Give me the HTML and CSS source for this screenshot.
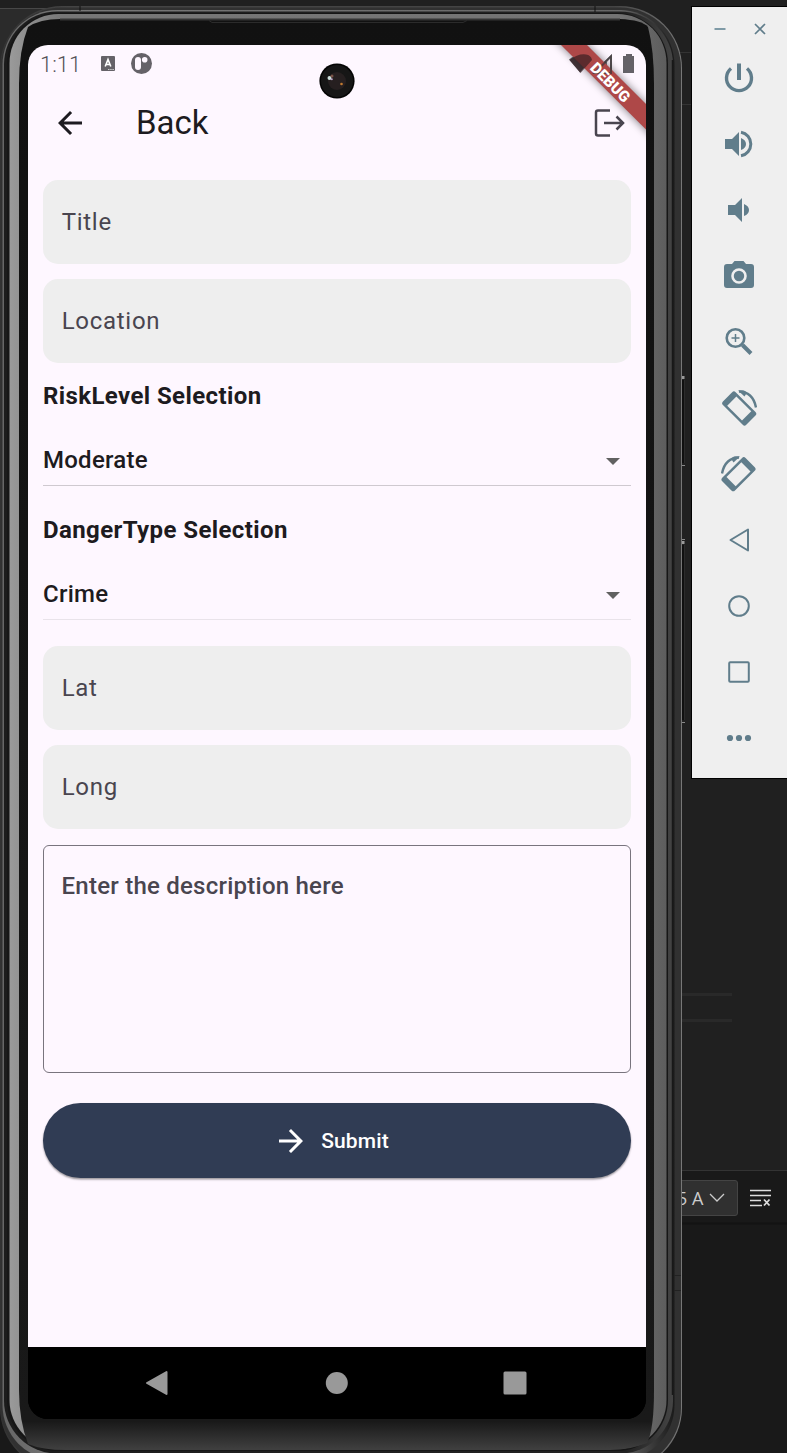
FILE: index.html
```html
<!DOCTYPE html>
<html lang="en">
<head>
<meta charset="utf-8">
<title>Android Emulator</title>
<link rel="stylesheet" href="styles.css">
</head>
<body>
<div class="desktop">
  <svg class="backdrop" width="787" height="1453" viewBox="0 0 787 1453">
    <rect width="787" height="1453" fill="#202020"/>
    <rect y="8" width="60" height="190" fill="#2b2b2b"/>
    <path d="M0 8.500H60" stroke="#484848"/>
    <path d="M670 52.500H692M670 104.500H692" stroke="#333"/>
    <path d="M680 994.500H732M680 1020.500H732" stroke="#292929" stroke-width="3"/>
    <rect y="1170" width="787" height="283" fill="#191919"/>
    <path d="M670 1170.500H787" stroke="#333"/>
    <path d="M670 1223.500H787" stroke="#131313" stroke-width="2"/>
  </svg>

  <div class="ide-bar">
    <div class="ide-select"><span class="ide-text">5 A</span>
      <svg width="18" height="12" viewBox="0 0 18 12"><path d="M2 2l7 7 7-7" fill="none" stroke="#ccc" stroke-width="1.300"/></svg>
    </div>
    <svg width="23" height="18" viewBox="0 0 23 18"><path d="M1 1.500H22M1 6.500H22M1 11.500H12M1 16.500H13" stroke="#ddd" stroke-width="1.600"/><path d="M15 10.500l5.500 6M20.500 10.500l-5.500 6" stroke="#ddd" stroke-width="1.800"/></svg>
  </div>

  <div class="phone">
    <svg class="frame" width="690" height="1453" viewBox="0 0 690 1453">
      <defs>
        <linearGradient id="f1"><stop offset="0" stop-color="#333"/><stop offset=".1" stop-color="#444"/><stop offset=".9" stop-color="#444"/><stop offset="1" stop-color="#777"/></linearGradient>
        <linearGradient id="f2"><stop offset="0" stop-color="#666"/><stop offset=".1" stop-color="#777"/><stop offset=".92" stop-color="#666"/><stop offset="1" stop-color="#1a1a1a"/></linearGradient>
        <linearGradient id="f3"><stop offset="0" stop-color="#1c1c1c"/><stop offset=".93" stop-color="#222"/><stop offset="1" stop-color="#444"/></linearGradient>
        <linearGradient id="f4"><stop offset="0" stop-color="#9a9a9a"/><stop offset=".08" stop-color="#777"/><stop offset=".93" stop-color="#737373"/><stop offset="1" stop-color="#5d5d5d"/></linearGradient>
        <linearGradient id="f5" x2="0" y2="1"><stop offset="0" stop-color="#111"/><stop offset=".98" stop-color="#191919"/><stop offset="1" stop-color="#404040"/></linearGradient>
      </defs>
      <path d="M681 380h4v83h-4zM681 545h4v175h-4z" fill="#101010"/>
      <path d="M684.500 380v83M684.500 545v175" stroke="#2c2c2c"/>
      <path d="M681.500 376h3v3h-3zM681.500 541h3v3h-3z" fill="#999"/>
      <path d="M681 465.500h4M681 539.500h4M681 722.500h4" stroke="#888"/>
      <rect x="0" y="6" width="682" height="1464" rx="62" fill="url(#f1)"/>
      <rect x="1" y="7.500" width="680" height="1461" rx="61" fill="#313131"/>
      <rect x="2.500" y="10" width="672" height="1450" rx="55" fill="url(#f2)"/>
      <rect x="4" y="11.500" width="669" height="1442" rx="53" fill="url(#f3)"/>
      <rect x="7" y="13" width="661" height="1438" rx="51" fill="#161616"/>
      <rect x="9.500" y="14" width="657" height="1435" rx="49" fill="url(#f4)"/>
      <path d="M60 19H620Q642 20 648 27Q654 50 654 84V1390Q654 1430 647 1443Q630 1450 610 1450H66Q42 1450 28 1444Q19 1420 19 1390V84Q19 50 28 27Q40 19 60 19Z" fill="url(#f5)"/>
      <path d="M60 19.500H620" stroke="#343434" stroke-width="2"/>
      <path d="M209 20.500l3 2H463l4-2" fill="none" stroke="#2b2b2b"/>
      <path d="M80 6V11M595 6V12" stroke="#111"/>
      <path d="M674 1275.500h7M674 1290.500h7" stroke="#222"/>
      <path d="M672.500 60V1395" stroke="#181818" stroke-width="1.500"/>
    </svg>

    <div class="screen">
      <div class="status">
        <span class="clock">1:11</span>
        <svg class="st-a" width="14" height="15" viewBox="0 0 14 15"><rect width="14" height="15" rx="1" fill="#656268"/><path d="M4.200 10.500L7 3.500l2.800 7M5 8.500h4" fill="none" stroke="#fff" stroke-width="1.600"/><path d="M7 13.500h6" stroke="#ccc" stroke-dasharray="1.500 .7"/></svg>
        <svg class="st-p" width="21" height="21" viewBox="0 0 21 21"><circle cx="10.500" cy="10.500" r="10.500" fill="#656268"/><rect x="4" y="4" width="6" height="13" rx="3" fill="#fef7ff"/><circle cx="13.700" cy="6.800" r="2.800" fill="#fef7ff"/></svg>
        <svg class="st-r" width="66" height="20" viewBox="0 0 66 20"><path d="M0 5.500Q11 -4 22 5.500L11 18.500Z" fill="#656268"/><path d="M25.500 18.500H42V2Z M37 17V8" fill="none" stroke="#656268" stroke-width="1.700"/><path d="M57 0h6v2h2v17H54V2h3z" fill="#656268"/></svg>
      </div>

      <div class="appbar">
        <svg class="i-back" width="36" height="36" viewBox="0 0 24 24"><path d="M20 11H7.830l5.590-5.590L12 4l-8 8 8 8 1.410-1.410L7.830 13H20v-2z" fill="#1d1b20"/></svg>
        <h1 class="title">Back</h1>
        <svg class="i-exit" width="32" height="28" viewBox="0 0 32 28"><path d="M16 1.500H4Q2 1.500 2 3.500V24.500Q2 26.500 4 26.500H16" fill="none" stroke="#49454f" stroke-width="2.500"/><path d="M10 14H29M22.500 7.500L29 14L22.500 20.500" fill="none" stroke="#49454f" stroke-width="2.500"/></svg>
      </div>

      <div class="form">
        <div class="field">Title</div>
        <div class="field">Location</div>
        <h2 class="heading risk">RiskLevel Selection</h2>
        <div class="drop"><span>Moderate</span><i class="caret"></i></div>
        <h2 class="heading danger">DangerType Selection</h2>
        <div class="drop second"><span>Crime</span><i class="caret"></i></div>
        <div class="field lat">Lat</div>
        <div class="field">Long</div>
        <div class="area">Enter the description here</div>
        <div class="submit"><svg width="36" height="36" viewBox="0 0 24 24"><path d="M12 4l-1.410 1.410L16.170 11H4v2h12.170l-5.580 5.590L12 20l8-8z" fill="#fff"/></svg><span>Submit</span></div>
      </div>

      <div class="nav">
        <svg width="22" height="26" viewBox="0 0 22 26"><path d="M1 13L20.500 2V24Z" fill="#999" stroke="#999" stroke-width="2" stroke-linejoin="round"/></svg>
        <svg width="24" height="24" viewBox="0 0 24 24"><circle cx="12.800" cy="12" r="11" fill="#999"/></svg>
        <svg width="24" height="24" viewBox="0 0 24 24"><rect x=".5" y=".5" width="23" height="23" rx="1.500" fill="#999"/></svg>
      </div>

      <svg class="banner" width="118" height="118" viewBox="0 0 118 118">
        <defs><filter id="blur" x="-20%" y="-20%" width="140%" height="140%"><feGaussianBlur stdDeviation="4.500"/></filter></defs>
        <path d="M13 -20L138 105V79L39 -20Z" fill="#000" opacity=".5" filter="url(#blur)"/>
        <path d="M33 0H59L118 59V84.500Z" fill="#ae4848"/>
        <path d="M41.500 15Q50 8.500 58 9.500Q63 10 64 15L52.500 28Z" fill="#301c1e" opacity=".65"/>
        <path d="M66.500 28H83V11.500Z" fill="none" stroke="#3c3638" stroke-width="2" opacity=".7"/>
        <text class="debug" transform="translate(82 37.500) rotate(45)" text-anchor="middle" y="5">DEBUG</text>
      </svg>
      <svg class="camera" width="36" height="36" viewBox="0 0 36 36"><circle cx="18" cy="18" r="17.600" fill="#050505"/><circle cx="18" cy="18" r="16" fill="#161616"/><circle cx="18" cy="18" r="9" fill="#261f20"/><circle cx="10.500" cy="15" r="2" fill="#cde0dc"/><circle cx="13" cy="13" r="1.500" fill="#7a5548"/><circle cx="12.800" cy="16.300" r="1" fill="#b9a0c8"/><circle cx="22.500" cy="21" r="1.300" fill="#c07a30"/></svg>
    </div>
  </div>

  <div class="tools">
    <div class="win">
      <svg width="12" height="14" viewBox="0 0 12 14"><path d="M.5 7H11.500" stroke="#7f9aa6" stroke-width="2"/></svg>
      <svg width="12" height="14" viewBox="0 0 12 14"><path d="M1 2l10 10M11 2L1 12" stroke="#607d8b" stroke-width="1.700"/></svg>
    </div>
    <svg class="tool" viewBox="0 0 36 36"><path d="M18 3.500v16.500" stroke="#607d8b" stroke-width="4"/><path d="M10 8.500A12.500 12.500 0 1 0 26 8.500" fill="none" stroke="#607d8b" stroke-width="3.400"/></svg>
    <svg class="tool" viewBox="0 0 36 36"><path d="M4 13h7l7-7v24l-7-7H4z M20 12q5 2 5 6t-5 6z" fill="#607d8b"/><path d="M20 6.200A12 12 0 0 1 20 29.800" fill="none" stroke="#607d8b" stroke-width="3"/></svg>
    <svg class="tool" viewBox="0 0 36 36"><path d="M7 13h7l7-7v24l-7-7H7z M23 12q5 2 5 6t-5 6z" fill="#607d8b"/></svg>
    <svg class="tool" viewBox="0 0 36 36"><path d="M13.500 3h9l2.500 3h5q3 0 3 3v18q0 3-3 3H6q-3 0-3-3V9q0-3 3-3h5z" fill="#607d8b"/><circle cx="18" cy="18" r="6.500" fill="#607d8b" stroke="#efefef" stroke-width="2.600"/></svg>
    <svg class="tool" viewBox="0 0 36 36"><g fill="none" stroke="#607d8b"><circle cx="14.500" cy="14" r="8.800" stroke-width="2.600"/><path d="M21.500 21l8.500 8.500" stroke-width="4"/><path d="M14.500 10v8M10.500 14h8" stroke-width="1.500"/></g></svg>
    <svg class="tool" viewBox="0 0 36 36"><g transform="rotate(-45 18 18)"><rect x="8.800" y="2" width="18" height="33" rx="2.500" fill="#607d8b"/><rect x="11.300" y="8" width="13" height="21" fill="#efefef"/></g><path d="M18 1.500Q32 2 35 17.500" fill="none" stroke="#607d8b" stroke-width="2.400"/><path d="M17 .5h6l3 2-2.500 4z" fill="#607d8b"/></svg>
    <svg class="tool" viewBox="0 0 36 36"><g transform="rotate(45 18 18)"><rect x="8.800" y="2" width="18" height="33" rx="2.500" fill="#607d8b"/><rect x="11.300" y="8" width="13" height="21" fill="#efefef"/></g><path d="M18 1.500Q4 2 1 17.500" fill="none" stroke="#607d8b" stroke-width="2.400"/><path d="M19 .5h-6l-3 2 2.500 4z" fill="#607d8b"/></svg>
    <svg class="tool" viewBox="0 0 36 36"><path d="M9.500 18L27 7.500V28.500Z" fill="none" stroke="#607d8b" stroke-width="2" stroke-linejoin="round"/></svg>
    <svg class="tool" viewBox="0 0 36 36"><circle cx="18" cy="18" r="9.800" fill="none" stroke="#607d8b" stroke-width="2"/></svg>
    <svg class="tool" viewBox="0 0 36 36"><rect x="8.200" y="8.200" width="19.600" height="19.600" rx="1" fill="none" stroke="#607d8b" stroke-width="2"/></svg>
    <svg class="tool" viewBox="0 0 36 36"><g fill="#607d8b"><circle cx="9" cy="18" r="3.100"/><circle cx="18" cy="18" r="3.100"/><circle cx="27" cy="18" r="3.100"/></g></svg>
  </div>
</div>
</body>
</html>
```
FILE: styles.css
```css
* { box-sizing: border-box; }
body { margin: 0; background: #202020; font-family: Roboto, "Noto Sans", sans-serif; }
svg { display: block; flex: none; }
.desktop { position: relative; width: 787px; height: 1453px; overflow: hidden; }
.backdrop { position: absolute; top: 0; left: 0; }

.ide-bar { position: absolute; left: 670px; top: 1179.500px; display: flex; align-items: center; gap: 11px; }
.ide-select { display: flex; align-items: center; gap: 4px; width: 68px; height: 36px; padding-left: 6px; background: #303030; border: 1px solid #444; border-radius: 3px; }
.ide-text { width: 27px; font: 18px "Open Sans", sans-serif; color: #ccc; white-space: nowrap; }

.phone { position: absolute; left: 0; top: 0; width: 690px; height: 1453px; padding: 45px 0 0 28px; }
.frame { position: absolute; left: 0; top: 0; }
.screen { position: relative; display: flex; flex-direction: column; width: 618px; height: 1374px; background: linear-gradient(#fef7ff 1300px, #000 1300px); border-radius: 20px; overflow: hidden; color: #1d1b20; }

.status { display: flex; height: 37px; padding: 0 11.500px 0 12px; align-items: center; }
.clock { width: 61px; font-size: 22px; font-weight: 300; letter-spacing: 0; padding-top: 1px; color: #555258; }
.st-p { margin-left: 16px; }
.st-r { margin-left: auto; }

.appbar { display: flex; align-items: center; height: 82px; padding: 0 20px 0 24px; }
.title { margin: 0 0 0 48px; font-size: 33px; font-weight: 400; line-height: 42px; padding-bottom: 1px; }
.i-exit { margin-left: auto; }

.form { flex: 1; display: flex; flex-direction: column; padding: 15.500px 15px 0; background: #fef7ff; }
.field { display: flex; align-items: center; flex: none; height: 84px; margin-bottom: 15.300px; padding: 0 18.700px; background: #eee; border-radius: 15px; font-size: 24px; letter-spacing: .72px; color: #49454f; }
.lat, .lat + .field { padding-bottom: 1px; }
.heading { margin: 0; font-size: 24px; line-height: 36px; font-weight: 700; height: 36px; letter-spacing: .4px; }
.drop { display: flex; align-items: center; justify-content: space-between; height: 50px; margin-top: 22px; padding: 0 10.500px 1px 0; border-bottom: 1px solid #cfc9d0; font-size: 24px; font-weight: 500; letter-spacing: .25px; }
.drop.second { border-color: #e9e3ea; }
.danger { margin-top: 26px; }
.caret { border: 7.500px solid transparent; border-top-color: #616161; border-bottom: 0; margin: 3px .5px 0 0; }
.lat { margin-top: 26px; }
.area { height: 228px; flex: none; border: 1.500px solid #79747e; border-radius: 6px; padding: 22px 17.500px; font-size: 24px; font-weight: 500; line-height: 36px; letter-spacing: .24px; color: #49454f; }
.submit { display: flex; align-items: center; justify-content: center; gap: 12px; height: 75px; flex: none; margin-top: 30px; padding: 1px 12px 0 0; border-radius: 38px; background: #303c54; box-shadow: 0 1.500px 2px rgba(0,0,0,.4); color: #fff; font-size: 21px; font-weight: 500; letter-spacing: .15px; }

.nav { display: flex; align-items: center; justify-content: space-between; height: 72px; padding: 0 119px 0 118px; background: #000; }
.banner { position: absolute; right: 0; top: 0; }
.debug { font-size: 15.300px; font-weight: 900; fill: #fff; }
.camera { position: absolute; left: 291px; top: 18px; }

.tools { position: absolute; left: 691px; top: 6px; width: 98px; height: 773px; padding-right: 2.500px; display: flex; flex-direction: column; align-items: center; gap: 30px; background: #efefef; border: 1px solid #000; }
.win { display: flex; gap: 28px; height: 23px; padding: 15px 0 0 2px; }
.tool { width: 36px; height: 36px; }
```
